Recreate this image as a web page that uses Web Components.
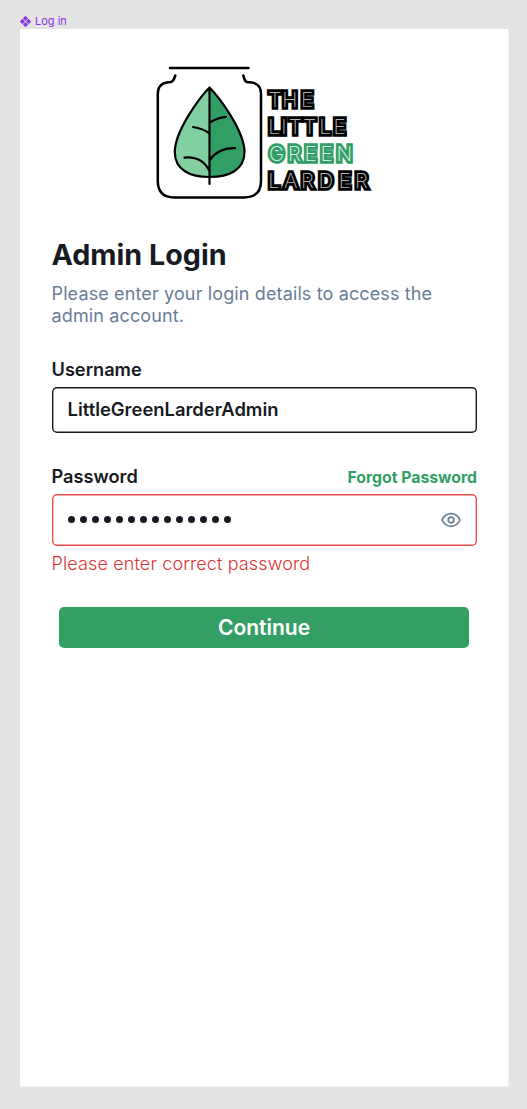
<!DOCTYPE html>
<html lang="en">
<head>
<meta charset="utf-8">
<title>Log in</title>
<style>
html,body{margin:0;background:#e4e4e4;font-family:Inter,"Liberation Sans",sans-serif;color:#171a23}
</style>
</head>
<body>
<login-frame>
  <brand-logo></brand-logo>
  <page-heading>
    Admin Login
    <span slot="sub">Please enter your login details to access the admin account.</span>
  </page-heading>
  <form-field class="user" label="Username"><span>LittleGreenLarderAdmin</span></form-field>
  <form-field class="pass" label="Password" invalid>
    <a slot="action">Forgot Password</a>
    <password-dots count="14"></password-dots>
    <eye-icon slot="icon"></eye-icon>
    <span slot="error">Please enter correct password</span>
  </form-field>
  <primary-button>Continue</primary-button>
</login-frame>
<script>
const define = (name, html, init) => customElements.define(name, class extends HTMLElement {
  constructor() {
    super();
    this.attachShadow({mode: 'open'}).innerHTML = html;
  }
  connectedCallback() { if (init) init(this, this.shadowRoot); }
});

define('login-frame', `
<style>
:host{display:flex;flex-direction:column;box-sizing:border-box;height:1109px;padding:14px 18px 22px 20px}
.tag{display:flex;align-items:center;height:15px;gap:4px;font-size:11px;line-height:15px;color:#8638e5;flex:none}
.tag svg{display:block}
main{flex:1;background:#fff;display:flex;flex-direction:column;padding:0 31px 0 31.5px;border:solid #f1f1f1;border-width:0 1px 1px 0}
</style>
<div class="tag"><svg width="11" height="11" viewBox="0 0 11 11" fill="#8638e5" stroke="#8638e5" stroke-width=".4"><path d="M5.500 0 7.900 2.400 5.500 4.800 3.100 2.400zM5.500 6.200 7.900 8.600 5.500 11 3.100 8.600zM2.400 3.100 4.800 5.500 2.400 7.900 0 5.500zM8.600 3.100 11 5.500 8.600 7.900 6.200 5.500z"/></svg><span>Log in</span></div>
<main><slot></slot></main>`);

define('brand-logo', `
<style>
:host{display:block;height:150px;margin:26px 0 0 93.5px}
svg{display:block}
text{font-family:Inter,sans-serif;font-weight:200;font-size:20.5px;paint-order:stroke;stroke:#000;stroke-width:5.6px;stroke-linejoin:miter;stroke-miterlimit:2;fill:#b4b4b4}
.g{stroke:#319f65;fill:#e4f6ec}
</style>
<svg width="235" height="150" viewBox="145 55 235 150">
  <g fill="none" stroke="#000" stroke-width="2.500" stroke-linecap="round" stroke-linejoin="round">
    <path d="M170 68H248.500"/>
    <path d="M175.300 75.500C174 79.500 173 82.300 170 82.300H168Q157.800 83.500 157.800 94V181Q158 197.400 174 197.400H244Q261 197.400 261 181V94Q261 83 250 82.300H248C245 82.300 244.500 79.500 243.300 75.500"/>
    <path stroke="none" fill="#82cfa2" d="M209.500 87.500C200 97 174.800 131 174.800 152C174.800 170 190 177 209.500 177z"/>
    <path stroke="none" fill="#319f65" d="M209.500 87.500C219 97 244.500 131 244.500 152C244.500 170 229 177 209.500 177z"/>
    <path stroke-width="2.200" d="M209.500 87.500C200 97 174.800 131 174.800 152C174.800 170 190 177 209.500 177C229 177 244.500 170 244.500 152C244.500 131 219 97 209.500 87.500V184M209.500 123Q216 118 226 116.800M193 127Q203 128.500 209.500 133.500M209.500 160.500Q218 147.800 235 148.200M184.500 157.600Q202 156 209.500 171"/>
  </g>
  <text x="268.600 282.300 301" y="107.300">THE</text>
  <text x="268.200 281.300 288.800 303.300 319.300 333.500" y="134.100">LITTLE</text>
  <text class="g" x="269 288 304.600 320.500 336.500" y="161">GREEN</text>
  <text x="268.200 284 301 318.500 338.800 355" y="187.800">LARDER</text>
</svg>`);

define('page-heading', `
<style>
:host{display:block;margin-top:33px}
h1{margin:0;font-size:28.7px;line-height:34px;font-weight:700}
p{margin:11px 0 0;font-size:18px;line-height:22px;color:#6a7d97;letter-spacing:.13px}
</style>
<h1><slot></slot></h1><p><slot name="sub"></slot></p>`);

define('form-field', `
<style>
:host{display:block;margin-top:30px}
:host([invalid]){margin-top:31px}
.top{display:flex;justify-content:space-between;align-items:center;height:24px;font-size:18.2px;font-weight:600}
.action{font-size:15.8px;font-weight:700;color:#319f65;padding-top:2px}
.box{box-sizing:border-box;display:flex;align-items:center;justify-content:space-between;height:46px;margin-top:6px;padding:0 16px 2px;box-shadow:inset 0 0 0 1.4px #1a1a1f;border-radius:5px;font-size:18.4px;font-weight:600}
:host([invalid]) .box{height:52px;box-shadow:inset 0 0 0 1.4px #eb4f4f}
.error{font-size:18px;line-height:22px;margin-top:7px;color:#dd3535;font-weight:300;letter-spacing:.13px}
:host(:not([invalid])) .error{display:none}
</style>
<div class="top"><span class="label"></span><span class="action"><slot name="action"></slot></span></div>
<div class="box"><slot></slot><slot name="icon"></slot></div>
<div class="error"><slot name="error"></slot></div>`,
(el, root) => { root.querySelector('.label').textContent = el.getAttribute('label'); });

define('password-dots', `
<style>
:host{display:flex;gap:5px}
i{width:7px;height:7px;border-radius:50%;background:#171a23}
</style>`,
(el, root) => { for (let n = +el.getAttribute('count'); n--;) root.append(document.createElement('i')); });

define('eye-icon', `
<style>:host{display:block;padding-top:2px}svg{display:block}</style>
<svg width="20" height="16" viewBox="0 0 20 16" fill="none" stroke="#6a7d97" stroke-width="1.700" stroke-linejoin="round"><path d="M1 8C2.800 4.200 6 1.700 10 1.700S17.200 4.200 19 8C17.200 11.800 14 14.300 10 14.300S2.800 11.800 1 8z"/><circle cx="10" cy="8" r="2.800"/></svg>`);

define('primary-button', `
<style>
:host{display:flex;align-items:center;justify-content:center;height:41px;margin:32px 8px 0 7.5px;border-radius:5px;background:#349f65;color:#fff;font-size:21px;font-weight:600}
</style><slot></slot>`);
</script>
</body>
</html>
